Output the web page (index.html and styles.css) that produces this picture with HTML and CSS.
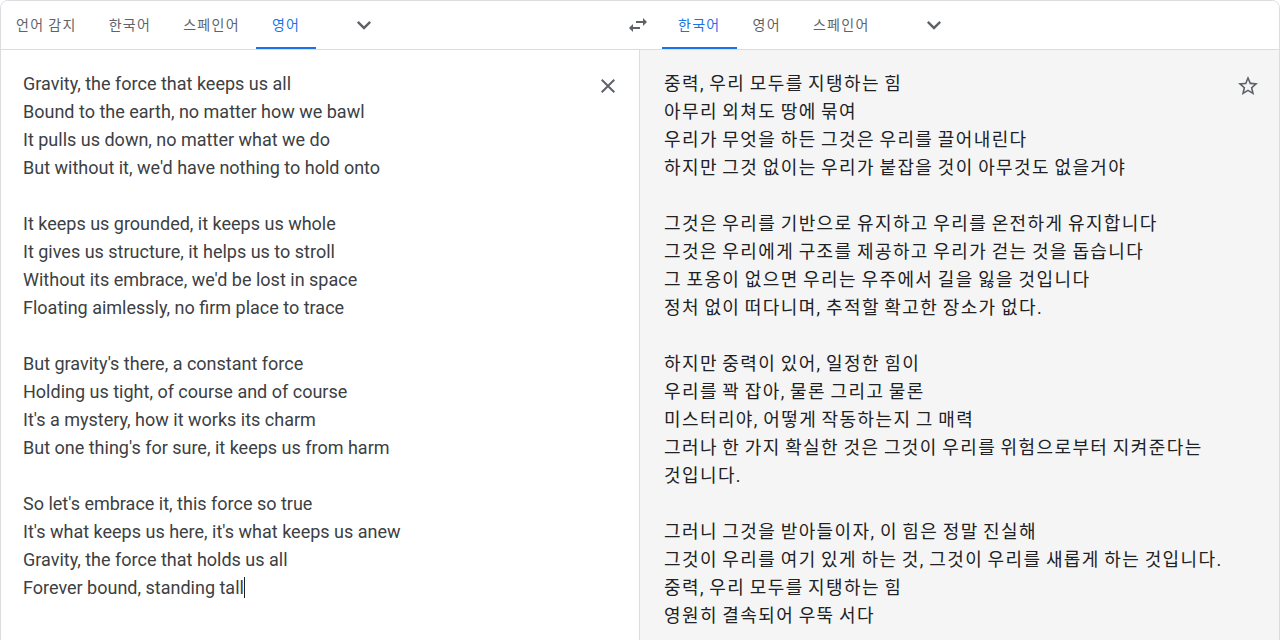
FILE: index.html
```html
<!DOCTYPE html>
<html lang="ko">
<head>
<meta charset="utf-8">
<title>번역</title>
<link rel="stylesheet" href="styles.css">
</head>
<body>
<div class="card">
  <div class="header">
    <div class="lang-group left">
      <div class="tab">언어 감지</div>
      <div class="tab">한국어</div>
      <div class="tab">스페인어</div>
      <div class="tab active">영어</div>
      <div class="more">
        <svg viewBox="0 0 24 24" width="28" height="28"><path d="M16.59 8.59L12 13.17 7.41 8.59 6 10l6 6 6-6z"/></svg>
      </div>
    </div>
    <div class="swap">
      <svg viewBox="0 0 24 24" width="24" height="24"><path d="M6.99 11L3 15l3.99 4v-3H14v-2H6.99v-3zM21 9l-3.99-4v3H10v2h7.01v3L21 9z"/></svg>
    </div>
    <div class="lang-group right">
      <div class="tab active">한국어</div>
      <div class="tab">영어</div>
      <div class="tab">스페인어</div>
      <div class="more">
        <svg viewBox="0 0 24 24" width="28" height="28"><path d="M16.59 8.59L12 13.17 7.41 8.59 6 10l6 6 6-6z"/></svg>
      </div>
    </div>
  </div>
  <div class="panes">
    <div class="pane source">
      <div class="text src-text">Gravity, the force that keeps us all
Bound to the earth, no matter how we bawl
It pulls us down, no matter what we do
But without it, we'd have nothing to hold onto

It keeps us grounded, it keeps us whole
It gives us structure, it helps us to stroll
Without its embrace, we'd be lost in space
Floating aimlessly, no firm place to trace

But gravity's there, a constant force
Holding us tight, of course and of course
It's a mystery, how it works its charm
But one thing's for sure, it keeps us from harm

So let's embrace it, this force so true
It's what keeps us here, it's what keeps us anew
Gravity, the force that holds us all
Forever bound, standing tall<span class="caret"></span></div>
      <div class="icon-btn">
        <svg viewBox="0 0 24 24" width="24" height="24"><path d="M19 6.41L17.59 5 12 10.59 6.41 5 5 6.41 10.59 12 5 17.59 6.41 19 12 13.41 17.59 19 19 17.59 13.41 12z"/></svg>
      </div>
    </div>
    <div class="pane target">
      <div class="text tgt-text">중력, 우리 모두를 지탱하는 힘
아무리 외쳐도 땅에 묶여
우리가 무엇을 하든 그것은 우리를 끌어내린다
하지만 그것 없이는 우리가 붙잡을 것이 아무것도 없을거야

그것은 우리를 기반으로 유지하고 우리를 온전하게 유지합니다
그것은 우리에게 구조를 제공하고 우리가 걷는 것을 돕습니다
그 포옹이 없으면 우리는 우주에서 길을 잃을 것입니다
정처 없이 떠다니며, 추적할 확고한 장소가 없다.

하지만 중력이 있어, 일정한 힘이
우리를 꽉 잡아, 물론 그리고 물론
미스터리야, 어떻게 작동하는지 그 매력
그러나 한 가지 확실한 것은 그것이 우리를 위험으로부터 지켜준다는 것입니다.

그러니 그것을 받아들이자, 이 힘은 정말 진실해
그것이 우리를 여기 있게 하는 것, 그것이 우리를 새롭게 하는 것입니다.
중력, 우리 모두를 지탱하는 힘
영원히 결속되어 우뚝 서다</div>
      <div class="icon-btn star">
        <svg viewBox="0 0 24 24" width="24" height="24"><path d="M22 9.24l-7.19-.62L12 2 9.19 8.63 2 9.24l5.46 4.73L5.82 21 12 17.27 18.18 21l-1.63-7.03L22 9.24zM12 15.4l-3.760 2.27 1-4.28-3.32-2.88 4.38-.38L12 6.1l1.71 4.04 4.38.38-3.32 2.88 1 4.28L12 15.4z"/></svg>
      </div>
    </div>
  </div>
</div>
</body>
</html>
```

FILE: styles.css
```css
html, body {
  margin: 0;
  padding: 0;
  height: 100%;
  overflow: hidden;
  background: #ffffff;
}

body {
  font-family: Roboto, "Noto Sans CJK KR", "Liberation Sans", sans-serif;
}

.card {
  width: 1280px;
  box-sizing: border-box;
  border: 1px solid #dadce0;
  border-radius: 8px;
  min-height: 720px;
  display: flex;
  flex-direction: column;
  overflow: hidden;
}

.header {
  display: flex;
  height: 48px;
  border-bottom: 1px solid #dadce0;
  background: #fff;
}

.lang-group {
  display: flex;
  align-items: stretch;
}

.lang-group.left {
  flex: 0 0 614px;
  margin-left: -1px;
}

.lang-group.right {
  flex: 1;
}

.tab {
  display: flex;
  align-items: center;
  padding: 0 16px;
  font-family: "Noto Sans CJK KR", Roboto, sans-serif;
  font-size: 14px;
  letter-spacing: 1.3px;
  word-spacing: -1.3px;
  color: #5f6368;
  border-bottom: 2px solid transparent;
  white-space: nowrap;
}

.tab.active {
  color: #1a73e8;
  border-bottom-color: #1a73e8;
}

.more {
  width: 48px;
  margin-left: 24px;
  display: flex;
  align-items: center;
  justify-content: center;
  fill: #5f6368;
}

.swap {
  flex: 0 0 48px;
  display: flex;
  align-items: center;
  justify-content: center;
  fill: #5f6368;
}

.panes {
  display: flex;
  flex: 1;
}

.pane {
  display: flex;
  align-items: flex-start;
}

.pane.source {
  flex: 0 0 638px;
  border-right: 1px solid #dadce0;
}

.pane.target {
  flex: 1;
  background: #f5f5f5;
}

.text {
  flex: 1;
  white-space: pre-line;
  font-size: 18px;
  line-height: 28px;
  color: #3c4043;
}

.src-text {
  padding: 20px 0 20px 22px;
}

.tgt-text {
  padding: 20px 0 20px 24px;
  font-family: Roboto, "Noto Sans CJK KR", sans-serif;
  color: #202124;
  letter-spacing: 1.4px;
  word-spacing: -1.4px;
  word-break: keep-all;
}

.caret {
  display: inline-block;
  width: 1px;
  height: 21px;
  background: #202124;
  vertical-align: -4px;
}

.icon-btn {
  flex: 0 0 24px;
  width: 24px;
  height: 24px;
  margin: 24px 19px 0 8px;
  fill: #5f6368;
}

.icon-btn svg {
  display: block;
}

.icon-btn.star {
  margin-left: 5px;
}
```
